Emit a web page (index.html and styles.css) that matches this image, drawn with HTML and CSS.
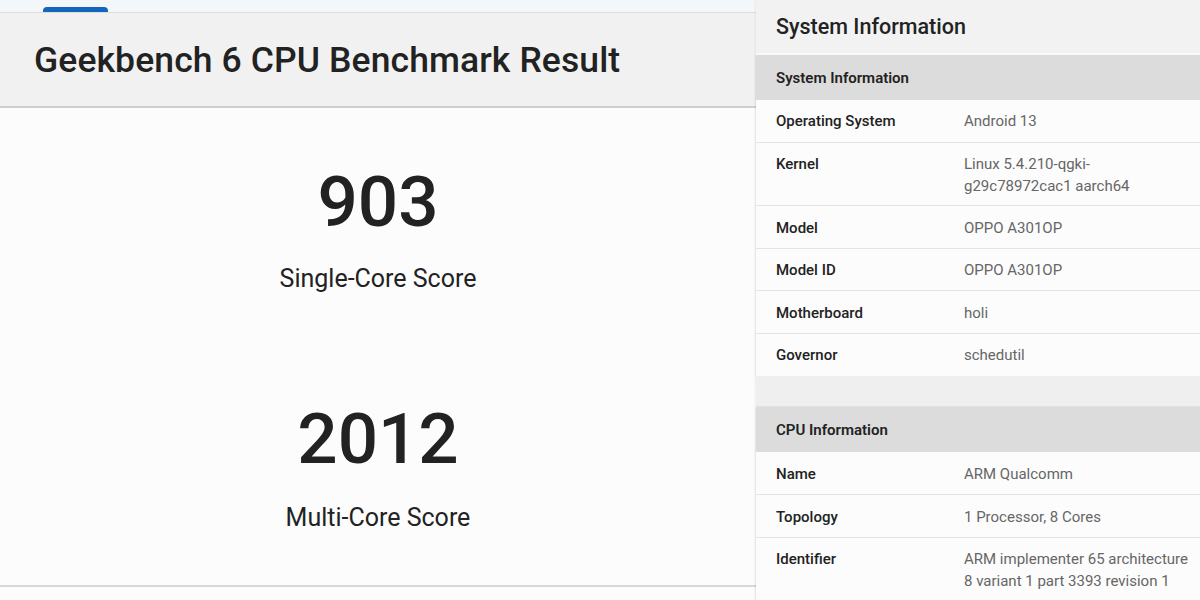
FILE: index.html
```html
<!DOCTYPE html>
<html>
<head>
<meta charset="utf-8">
<link rel="stylesheet" href="styles.css">
</head>
<body>
<div class="page">
  <section class="left">
    <div class="topstrip"><div class="tab"></div></div>
    <header class="result-head"><h1>Geekbench 6 CPU Benchmark Result</h1></header>
    <div class="scores">
      <div class="score">
        <div class="num">903</div>
        <div class="lbl">Single-Core Score</div>
      </div>
      <div class="score multi">
        <div class="num">2012</div>
        <div class="lbl">Multi-Core Score</div>
      </div>
    </div>
    <div class="bottom-rule"></div>
  </section>
  <section class="right">
    <div class="sys-title">System Information</div>
    <div class="card">
      <div class="card-head">System Information</div>
      <div class="row first"><div class="k">Operating System</div><div class="v">Android 13</div></div>
      <div class="row"><div class="k">Kernel</div><div class="v">Linux 5.4.210-qgki-<br>g29c78972cac1 aarch64</div></div>
      <div class="row"><div class="k">Model</div><div class="v">OPPO A301OP</div></div>
      <div class="row"><div class="k">Model ID</div><div class="v">OPPO A301OP</div></div>
      <div class="row"><div class="k">Motherboard</div><div class="v">holi</div></div>
      <div class="row last"><div class="k">Governor</div><div class="v">schedutil</div></div>
    </div>
    <div class="gap"></div>
    <div class="card">
      <div class="card-head">CPU Information</div>
      <div class="row"><div class="k">Name</div><div class="v">ARM Qualcomm</div></div>
      <div class="row"><div class="k">Topology</div><div class="v">1 Processor, 8 Cores</div></div>
      <div class="row last"><div class="k">Identifier</div><div class="v">ARM implementer 65 architecture<br>8 variant 1 part 3393 revision 1</div></div>
    </div>
  </section>
</div>
</body>
</html>
```
FILE: styles.css
```css
* { box-sizing: border-box; }
html, body { margin: 0; padding: 0; }
body {
  width: 1200px;
  height: 600px;
  overflow: hidden;
  background: #fcfcfc;
  font-family: Roboto, "Liberation Sans", sans-serif;
  color: #222;
}
.page { display: flex; height: 600px; }

.left { width: 756px; display: flex; flex-direction: column; background: #fcfcfc; }
.topstrip { height: 12px; background: #f4f7f9; padding-left: 43px; padding-top: 7px; }
.tab { width: 65px; height: 5px; background: #1565c0; border-radius: 4px 4px 0 0; }
.result-head {
  height: 96px;
  background: #f1f1f1;
  border-top: 1px solid #dcdcdc;
  border-bottom: 2px solid #cfcfcf;
  display: flex;
  align-items: center;
  padding-left: 34px;
}
.result-head h1 { margin: 0; font-size: 35.5px; font-weight: 500; letter-spacing: 0.1px; color: #222; }
.scores { flex: 0 0 auto; height: 477px; display: flex; flex-direction: column; align-items: center; padding-top: 52px; }
.score { display: flex; flex-direction: column; align-items: center; }
.score.multi { margin-top: 103px; }
.num { font-size: 71px; font-weight: 500; line-height: 84px; color: #222; }
.lbl { font-size: 25px; line-height: 30px; margin-top: 20px; color: #222; }
.multi .lbl { margin-top: 22px; }
.bottom-rule { height: 2px; background: #d8d8d8; }

.right { flex: 1; background: #f2f2f2; box-shadow: -1px 0 2px rgba(0,0,0,0.06); }
.sys-title { height: 55px; padding-left: 20px; display: flex; align-items: center; font-size: 21.5px; font-weight: 500; color: #222; border-bottom: 2px solid #fafafa; }
.card { background: #fcfcfc; box-shadow: 0 1px 2px rgba(0,0,0,0.15); }
.card-head { height: 45px; background: #dcdcdc; padding-left: 20px; display: flex; align-items: center; font-size: 15px; font-weight: 600; color: #222; }
.row { display: flex; border-bottom: 1px solid #e4e4e4; padding: 10.5px 0 8px 20px; font-size: 15px; line-height: 22px; min-height: 42.6px; }
.row.first { padding-top: 9.5px; }
.row.last { border-bottom: 0; }
.k { width: 188px; flex: none; font-weight: 500; color: #222; }
.v { color: #666; }
.gap { height: 31px; background: #efefef; border-bottom: 1px solid #e2e2e2; }
```
